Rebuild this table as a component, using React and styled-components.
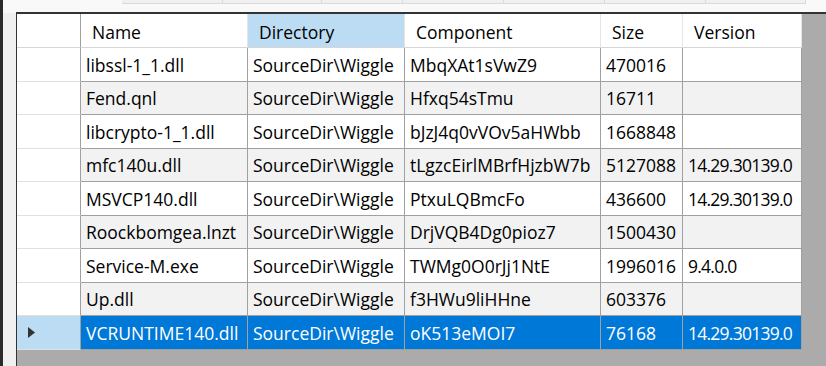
import React from 'react'
import styled, { createGlobalStyle } from 'styled-components'

const GlobalStyle = createGlobalStyle`
  html, body {
    margin: 0;
    padding: 0;
    background: #f0f0f0;
    overflow: hidden;
  }
  body {
    font-family: 'Open Sans', 'Noto Sans', sans-serif;
  }
`

// version strings are mostly digits and dots, which run wider than the original UI font
const COLUMNS = [
  { key: 'name', title: 'Name', width: 167 },
  { key: 'dir', title: 'Directory', width: 157 },
  { key: 'comp', title: 'Component', width: 196 },
  { key: 'size', title: 'Size', width: 82 },
  { key: 'ver', title: 'Version', width: 119, tight: true },
]

const ROWS = [
  { name: 'libssl-1_1.dll', dir: 'SourceDir\\Wiggle', comp: 'MbqXAt1sVwZ9', size: '470016', ver: '' },
  { name: 'Fend.qnl', dir: 'SourceDir\\Wiggle', comp: 'Hfxq54sTmu', size: '16711', ver: '' },
  { name: 'libcrypto-1_1.dll', dir: 'SourceDir\\Wiggle', comp: 'bJzJ4q0vVOv5aHWbb', size: '1668848', ver: '' },
  { name: 'mfc140u.dll', dir: 'SourceDir\\Wiggle', comp: 'tLgzcEirlMBrfHjzbW7b', size: '5127088', ver: '14.29.30139.0' },
  { name: 'MSVCP140.dll', dir: 'SourceDir\\Wiggle', comp: 'PtxuLQBmcFo', size: '436600', ver: '14.29.30139.0' },
  { name: 'Roockbomgea.lnzt', dir: 'SourceDir\\Wiggle', comp: 'DrjVQB4Dg0pioz7', size: '1500430', ver: '' },
  { name: 'Service-M.exe', dir: 'SourceDir\\Wiggle', comp: 'TWMg0O0rJj1NtE', size: '1996016', ver: '9.4.0.0' },
  { name: 'Up.dll', dir: 'SourceDir\\Wiggle', comp: 'f3HWu9liHHne', size: '603376', ver: '' },
  { name: 'VCRUNTIME140.dll', dir: 'SourceDir\\Wiggle', comp: 'oK513eMOI7', size: '76168', ver: '14.29.30139.0' },
]

const SELECTED = 8
const SORTED_COL = 'dir'

const Window = styled.div`
  display: flex;
  width: 826px;
  height: 366px;
  overflow: hidden;
`

const EdgeBar = styled.div`
  width: 3px;
  flex: none;
  background: #2b2b2b;
`

const Page = styled.div`
  flex: 1;
  display: flex;
  flex-direction: column;
  min-width: 0;
`

const TabStrip = styled.div`
  height: 13px;
  flex: none;
  display: flex;
  background: #f9f9f9;
`

const Tab = styled.div`
  width: ${({ $w }) => $w}px;
  height: 4px;
  flex: none;
  box-sizing: border-box;
  background: ${({ $active }) => ($active ? '#f9f9f9' : '#f0f0f0')};
  border-right: ${({ $active }) => ($active ? 'none' : '1px solid #dadada')};
  border-bottom: ${({ $active }) => ($active ? 'none' : '1px solid #dadada')};
`

const Body = styled.div`
  flex: 1;
  display: flex;
  min-height: 0;
`

const Margin = styled.div`
  width: 13px;
  flex: none;
  background: #f0f0f0;
`

const Grid = styled.div`
  flex: 1;
  min-width: 0;
  background: #ababab;
  border-top: 2px solid #333;
  border-left: 1px solid #333;
  margin-top: -1px;
  font-size: 17.5px;
  color: #000;
`

const Row = styled.div`
  display: flex;
  height: ${({ $h }) => $h}px;
`

const RowHeader = styled.div`
  width: 64px;
  flex: none;
  box-sizing: border-box;
  display: flex;
  align-items: center;
  padding-left: 11px;
  background: ${({ $selected }) => ($selected ? '#bcdcf4' : '#fff')};
  border-right: 1px solid #a0a0a0;
  border-bottom: 1px solid ${({ $head }) => ($head ? '#d6d6d6' : '#e0e0e0')};
`

const HeaderCell = styled.div`
  width: ${({ $w }) => $w}px;
  flex: none;
  box-sizing: border-box;
  display: flex;
  align-items: center;
  padding: 2px 0 0 11px;
  background: ${({ $sorted }) => ($sorted ? '#bcdcf4' : '#fff')};
  border-right: 1px solid #e5e5e5;
  border-bottom: 1px solid #d6d6d6;
  white-space: nowrap;
  overflow: hidden;
`

const Cell = styled.div`
  width: ${({ $w }) => $w}px;
  flex: none;
  box-sizing: border-box;
  display: flex;
  align-items: center;
  padding: 1px 0 0 5px;
  letter-spacing: ${({ $tight }) => ($tight ? '-0.75px' : 'normal')};
  background: ${({ $selected, $alt }) => ($selected ? '#0078d7' : $alt ? '#f2f2f2' : '#fff')};
  color: ${({ $selected }) => ($selected ? '#fff' : '#000')};
  border-right: 1px solid #a0a0a0;
  border-bottom: 1px solid #a0a0a0;
  white-space: nowrap;
  overflow: hidden;
`

const Arrow = () => (
  <svg width="7" height="11" viewBox="0 0 7 11">
    <path d="M0 0 L7 5.5 L0 11 Z" fill="#333" />
  </svg>
)

const TAB_WIDTHS = [119, 101, 99, 81, 101, 101, 101, 100]

export default function App() {
  return (
    <>
      <GlobalStyle />
      <Window>
        <EdgeBar />
        <Page>
          <TabStrip>
            {TAB_WIDTHS.map((w, i) => (
              <Tab key={i} $w={w} $active={i === 0} />
            ))}
          </TabStrip>
          <Body>
            <Margin />
            <Grid>
              <Row $h={34}>
                <RowHeader $head />
                {COLUMNS.map((c) => (
                  <HeaderCell key={c.key} $w={c.width} $sorted={c.key === SORTED_COL}>
                    {c.title}
                  </HeaderCell>
                ))}
              </Row>
              {ROWS.map((r, i) => (
                <Row key={r.name} $h={33.5}>
                  <RowHeader $selected={i === SELECTED}>
                    {i === SELECTED && <Arrow />}
                  </RowHeader>
                  {COLUMNS.map((c) => (
                    <Cell
                      key={c.key}
                      $w={c.width}
                      $tight={c.tight}
                      $alt={i % 2 === 1}
                      $selected={i === SELECTED}
                    >
                      {r[c.key]}
                    </Cell>
                  ))}
                </Row>
              ))}
            </Grid>
          </Body>
        </Page>
      </Window>
    </>
  )
}
